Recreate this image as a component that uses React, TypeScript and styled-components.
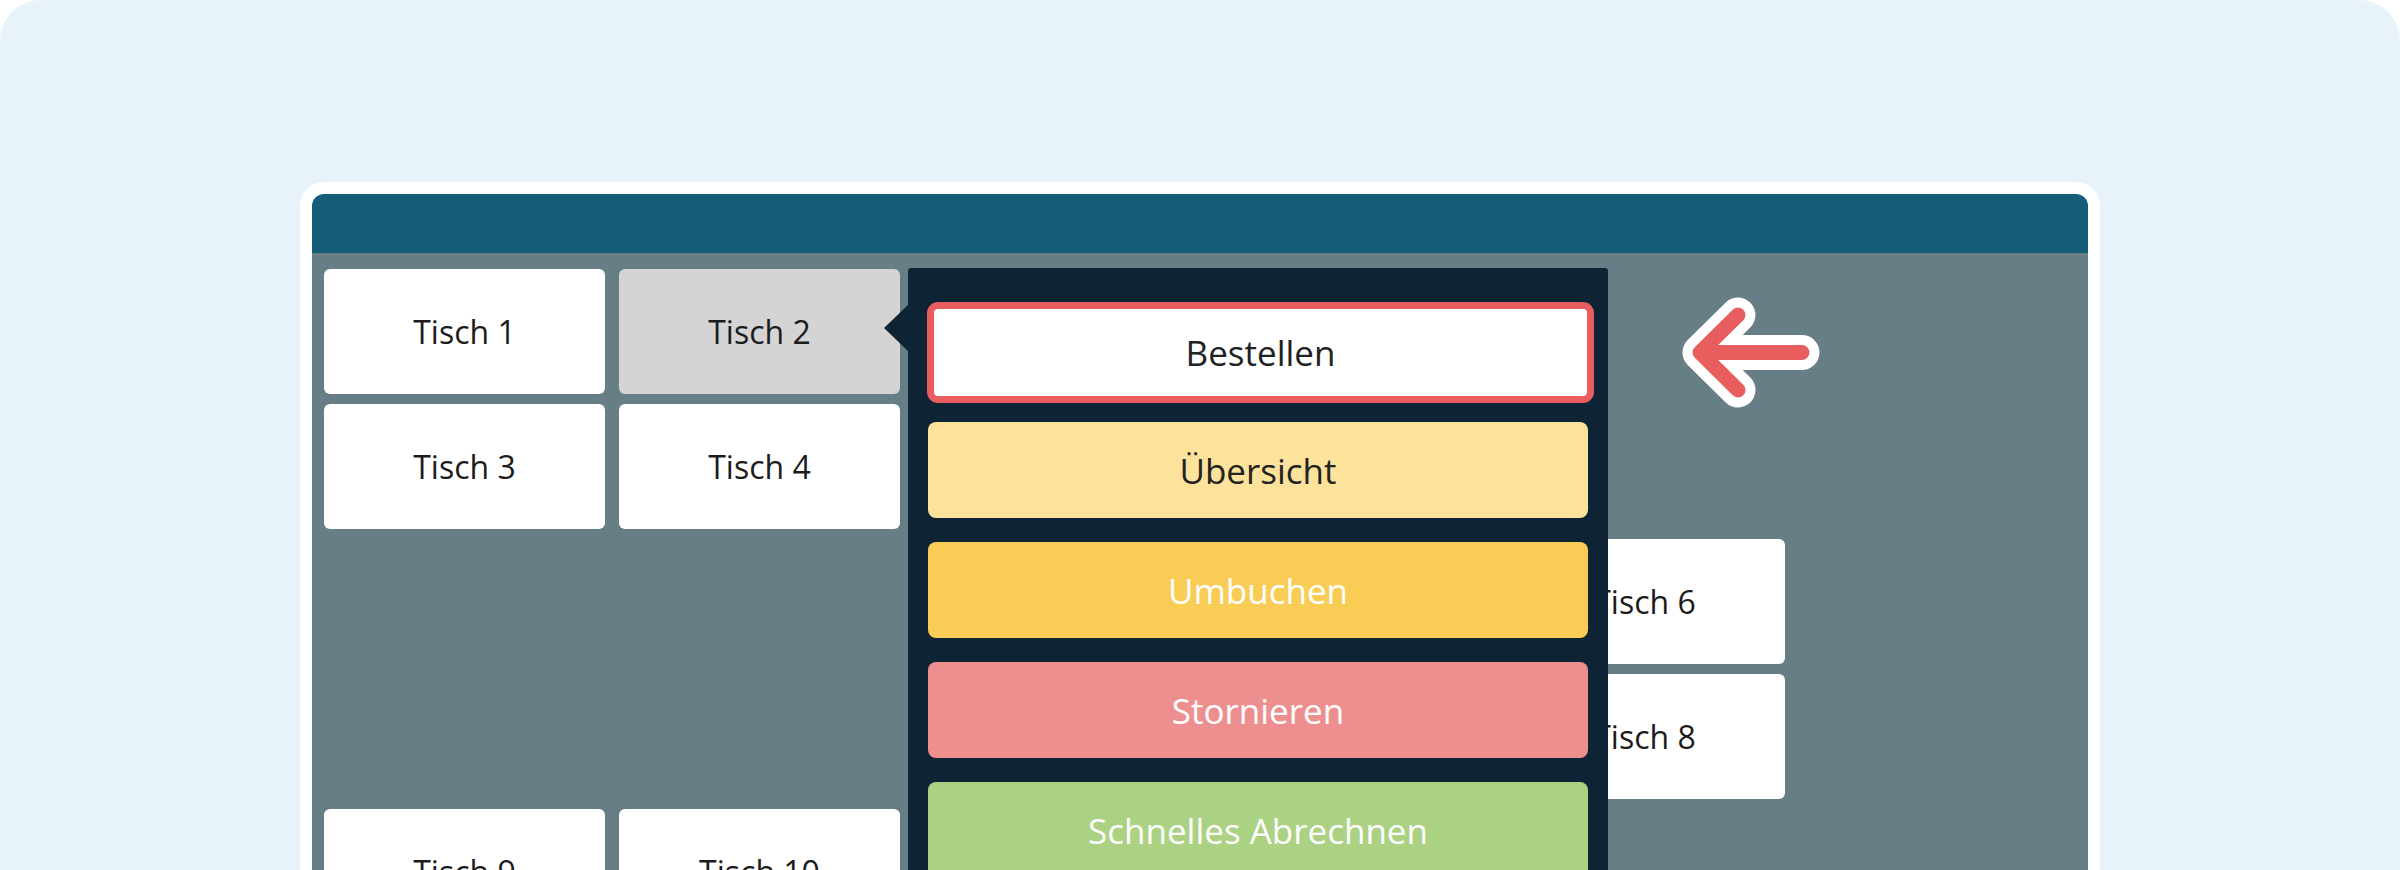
import * as React from "react";
import styled, { createGlobalStyle } from "styled-components";

const GlobalStyle = createGlobalStyle`
  html, body {
    margin: 0;
    padding: 0;
    background: #ffffff;
    overflow: hidden;
  }
  body {
    font-family: "Open Sans", "Noto Sans", "Liberation Sans", sans-serif;
  }
`;

const Stage = styled.div`
  height: 870px;
  background: #e8f3f9;
  border-radius: 40px 40px 0 0;
  padding-top: 182px;
  box-sizing: border-box;
  overflow: hidden;
`;

const Frame = styled.div`
  width: 1800px;
  margin: 0 auto;
  padding: 12px 12px 0;
  box-sizing: border-box;
  background: #ffffff;
  border-radius: 24px 24px 0 0;
`;

const Window = styled.div`
  border-radius: 12px 12px 0 0;
  overflow: hidden;
  display: flex;
  flex-direction: column;
`;

const TitleBar = styled.div`
  height: 59px;
  background: #135d79;
`;

const FloorPlan = styled.div`
  position: relative;
  height: 720px;
  background: #687e86;
  padding: 16px 12px 0;
  box-sizing: border-box;
`;

const TableGrid = styled.div`
  display: grid;
  grid-template-columns: repeat(5, 281px);
  grid-auto-rows: 125px;
  column-gap: 14px;
  row-gap: 10px;
`;

const Table = styled.div<{ $active?: boolean; $col: number; $row: number }>`
  grid-column: ${(p) => p.$col};
  grid-row: ${(p) => p.$row};
  display: flex;
  align-items: center;
  justify-content: center;
  border-radius: 6px;
  background: ${(p) => (p.$active ? "#d4d4d4" : "#ffffff")};
  color: #1c1c1c;
  font-size: 32px;
`;

const Menu = styled.div`
  position: absolute;
  left: 596px;
  top: 15px;
  width: 700px;
  height: 720px;
  padding: 34px 20px 0;
  box-sizing: border-box;
  background: #0e2334;
  border-radius: 3px 3px 0 0;
  display: flex;
  flex-direction: column;
  gap: 24px;

  &::before {
    content: "";
    position: absolute;
    left: -24px;
    top: 37px;
    border-right: 24px solid #0e2334;
    border-top: 23px solid transparent;
    border-bottom: 23px solid transparent;
  }
`;

const MenuButton = styled.div<{ $bg: string; $fg: string; $selected?: boolean }>`
  flex: 0 0 auto;
  height: ${(p) => (p.$selected ? "101px" : "96px")};
  margin: ${(p) => (p.$selected ? "0 -6px -5px -1px" : "0")};
  box-sizing: border-box;
  display: flex;
  align-items: center;
  justify-content: center;
  border-radius: ${(p) => (p.$selected ? "11px" : "8px")};
  border: ${(p) => (p.$selected ? "7px solid #e85d5d" : "none")};
  background: ${(p) => p.$bg};
  color: ${(p) => p.$fg};
  font-size: 35px;
`;

const Pointer = styled.svg`
  position: absolute;
  left: 1358px;
  top: 27px;
`;

const tables = [
  { name: "Tisch 1", col: 1, row: 1 },
  { name: "Tisch 2", col: 2, row: 1, active: true },
  { name: "Tisch 3", col: 1, row: 2 },
  { name: "Tisch 4", col: 2, row: 2 },
  { name: "Tisch 6", col: 5, row: 3 },
  { name: "Tisch 8", col: 5, row: 4 },
  { name: "Tisch 9", col: 1, row: 5 },
  { name: "Tisch 10", col: 2, row: 5 },
];

const actions = [
  { label: "Bestellen", bg: "#ffffff", fg: "#222222", selected: true },
  { label: "Übersicht", bg: "#fce29a", fg: "#222222" },
  { label: "Umbuchen", bg: "#f9cc55", fg: "#ffffff" },
  { label: "Stornieren", bg: "#ee8f8f", fg: "#ffffff" },
  { label: "Schnelles Abrechnen", bg: "#abd283", fg: "#ffffff" },
];

const App: React.FC = () => {
  return (
    <>
      <GlobalStyle />
      <Stage>
        <Frame>
          <Window>
            <TitleBar />
            <FloorPlan>
              <TableGrid>
                {tables.map((t) => (
                  <Table key={t.name} $col={t.col} $row={t.row} $active={t.active}>
                    {t.name}
                  </Table>
                ))}
              </TableGrid>
              <Menu>
                {actions.map((a) => (
                  <MenuButton key={a.label} $bg={a.bg} $fg={a.fg} $selected={a.selected}>
                    {a.label}
                  </MenuButton>
                ))}
              </Menu>
              <Pointer width="160" height="145" viewBox="0 0 160 145">
                <g fill="none" strokeLinecap="round" strokeLinejoin="round">
                  <path d="M68 35 L30 72.5 L68 110 M30 72.5 H132" stroke="#ffffff" strokeWidth="35" />
                  <path d="M68 35 L30 72.5 L68 110 M30 72.5 H132" stroke="#e85d5d" strokeWidth="15" />
                </g>
              </Pointer>
            </FloorPlan>
          </Window>
        </Frame>
      </Stage>
    </>
  );
};

export default App;
